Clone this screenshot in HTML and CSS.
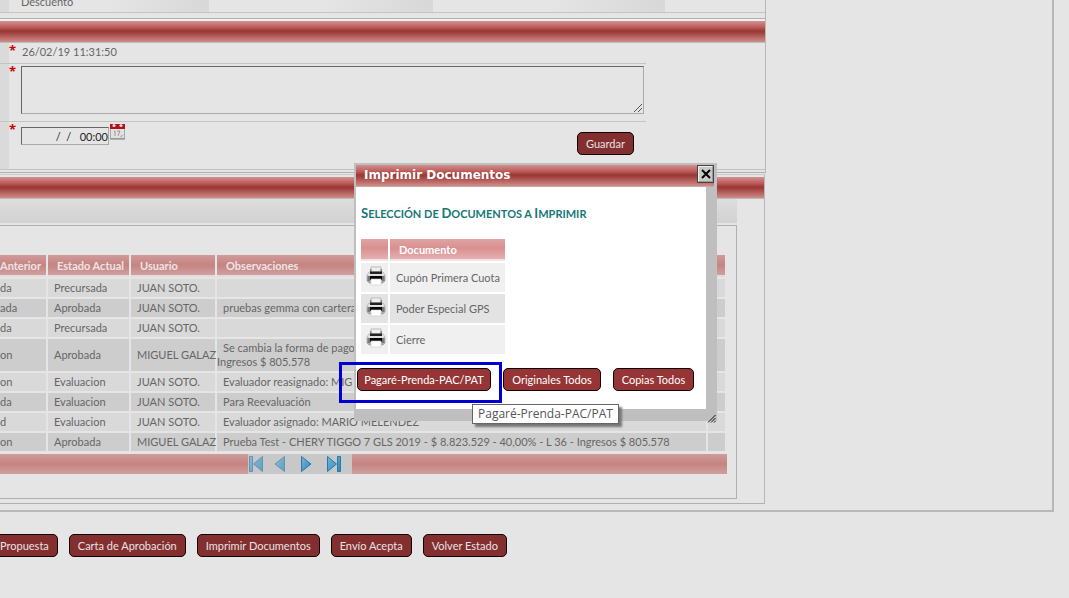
FILE: index.html
```html
<!DOCTYPE html>
<html lang="es">
<head>
<meta charset="utf-8">
<title>Imprimir Documentos</title>
<link rel="stylesheet" href="styles.css">
</head>
<body>
<svg width="0" height="0" class="defs" aria-hidden="true">
  <defs>
    <linearGradient id="metal" x1="0" y1="0" x2="0" y2="1"><stop offset="0" stop-color="#f4f4f4"/><stop offset="1" stop-color="#a4a4a4"/></linearGradient>
    <linearGradient id="blue" x1="0" y1="0" x2="1" y2="1"><stop offset="0" stop-color="#7ab4d6"/><stop offset="1" stop-color="#2787c0"/></linearGradient>
    <symbol id="printer" viewBox="0 0 20 20">
      <path d="M5 1h10v7H5z" fill="#eee" stroke="#bbb"/>
      <path d="M3 6h14l2 3v6l-2 2H3l-2-2V9z" fill="url(#metal)" stroke="#999" stroke-width=".6"/>
      <path d="M4 3h1.500v4H4zM14.500 3H16v4h-1.500z" fill="#888"/>
      <path d="M4 5.500h12v2.500H4z" fill="#222"/>
      <path d="M4 10h12v4H4z" fill="#050505"/>
      <path d="M1.500 10H4v5H1.500zM16 10h2.500v5H16z" fill="#777"/>
      <path d="M5 13h10v6H5z" fill="#fff" stroke="#ccc" stroke-width=".6"/>
    </symbol>
  </defs>
</svg>
<div class="frame">
  <div class="panel top-panel">
    <div class="fields"><span class="label-cell"></span><span class="field-one">Descuento</span><span class="field-two"></span><span class="field-three"></span></div>
  </div>
  <form class="panel form-panel">
    <div class="bar"></div>
    <div class="form-body">
      <div class="form-row date-row"><span class="star">*</span><span>26/02/19 11:31:50</span></div>
      <div class="form-row note-row"><span class="star">*</span><div class="note"><textarea aria-label="Observaciones"></textarea><svg class="grip" width="10" height="10" viewBox="0 0 10 10"><path d="M1 9L9 1M5 9l4-4" stroke="#555"/></svg></div></div>
      <div class="form-row time-row"><span class="star">*</span><input class="time" type="text" aria-label="Fecha y hora" value="/  /   00:00">
        <svg class="calendar" width="15" height="17" viewBox="0 0 15 17"><path d="M.5 5h14v11H.5z" fill="#e2e2e2" stroke="#aaa"/><path d="M0 15h15v1.500H0z" fill="#999"/><path d="M0 1h15v5H0z" fill="#b41118"/><circle cx="4" cy="2.500" r="1.600" fill="#ddd"/><circle cx="11" cy="2.500" r="1.600" fill="#ddd"/><path d="M4 9l1-1v5M7 8h3l-2 5" fill="none" stroke="#888" stroke-width=".8"/><path d="M10 13l4-2-3 4z" fill="#a7bac4"/></svg>
        <button class="btn save" type="button">Guardar</button></div>
    </div>
  </form>
  <section class="panel history">
    <div class="bar"></div>
    <div class="toolbar"></div>
    <div class="box">
      <table class="log">
        <colgroup><col class="c1"><col class="c2"><col class="c3"><col><col class="c5"></colgroup>
        <thead><tr><th class="cut">Anterior</th><th>Estado Actual</th><th>Usuario</th><th>Observaciones</th><th></th></tr></thead>
        <tbody>
          <tr><td class="cut">da</td><td>Precursada</td><td>JUAN SOTO.</td><td></td><td></td></tr>
          <tr><td class="cut">ada</td><td>Aprobada</td><td>JUAN SOTO.</td><td>pruebas gemma con cartera</td><td></td></tr>
          <tr><td class="cut">da</td><td>Precursada</td><td>JUAN SOTO.</td><td></td><td></td></tr>
          <tr><td class="cut">on</td><td>Aprobada</td><td>MIGUEL GALAZ</td><td class="wrapped">Se cambia la forma de pago<br>Ingresos $ 805.578</td><td></td></tr>
          <tr><td class="cut">on</td><td>Evaluacion</td><td>JUAN SOTO.</td><td>Evaluador reasignado: MIG</td><td></td></tr>
          <tr><td class="cut">da</td><td>Evaluacion</td><td>JUAN SOTO.</td><td>Para Reevaluación</td><td></td></tr>
          <tr><td class="cut">d</td><td>Evaluacion</td><td>JUAN SOTO.</td><td>Evaluador asignado: MARIO MELENDEZ</td><td></td></tr>
          <tr><td class="cut">on</td><td>Aprobada</td><td>MIGUEL GALAZ</td><td>Prueba Test - CHERY TIGGO 7 GLS 2019 - $ 8.823.529 - 40,00% - L 36 - Ingresos $ 805.578</td><td></td></tr>
        </tbody>
      </table>
      <div class="pager"><nav class="pages" aria-label="Páginas">
        <button type="button" class="off" aria-label="Primera"><svg width="16" height="18" viewBox="0 0 16 18"><path d="M1.500 1.500h3v15h-3zM14.500 1.500v15L5.500 9z"/></svg></button>
        <button type="button" class="off" aria-label="Anterior"><svg width="16" height="18" viewBox="0 0 16 18"><path d="M10.500 1.500v15L1 9z"/></svg></button>
        <button type="button" aria-label="Siguiente"><svg width="16" height="18" viewBox="0 0 16 18"><path d="M1.500 1.500v15L11 9z"/></svg></button>
        <button type="button" aria-label="Última"><svg width="16" height="18" viewBox="0 0 16 18"><path d="M11.500 1.500h3v15h-3zM1.500 1.500v15l9-7.500z"/></svg></button>
      </nav></div>
    </div>
  </section>
</div>
<div class="actions">
  <button class="btn first" type="button">Propuesta</button>
  <button class="btn" type="button">Carta de Aprobación</button>
  <button class="btn" type="button">Imprimir Documentos</button>
  <button class="btn" type="button">Envío Acepta</button>
  <button class="btn" type="button">Volver Estado</button>
</div>

<div class="modal" role="dialog" aria-labelledby="modal-title">
  <div class="modal-head"><h1 id="modal-title">Imprimir Documentos</h1><button class="close" type="button" aria-label="Cerrar"><svg width="12" height="12" viewBox="0 0 12 12"><path d="M2 2l8 8M10 2l-8 8" stroke="#000" stroke-width="2"/></svg></button></div>
  <div class="modal-body">
    <h2><span>S</span>elección de <span>D</span>ocumentos a <span>I</span>mprimir</h2>
    <table class="docs">
      <thead><tr><th class="icon"></th><th>Documento</th></tr></thead>
      <tbody>
        <tr><td class="icon"><svg width="20" height="20"><use href="#printer"/></svg></td><td>Cupón Primera Cuota</td></tr>
        <tr><td class="icon"><svg width="20" height="20"><use href="#printer"/></svg></td><td>Poder Especial GPS</td></tr>
        <tr><td class="icon"><svg width="20" height="20"><use href="#printer"/></svg></td><td>Cierre</td></tr>
      </tbody>
    </table>
    <div class="modal-actions">
      <button class="btn" type="button">Pagaré-Prenda-PAC/PAT</button>
      <button class="btn" type="button">Originales Todos</button>
      <button class="btn" type="button">Copias Todos</button>
    </div>
  </div>
  <svg class="resize" width="9" height="9" viewBox="0 0 9 9"><path d="M1 8.500L8.500 1M4 8.500L8.500 4M7 8.500L8.500 7" stroke="#111"/></svg>
</div>
<div class="highlight"></div>
<div class="tooltip" role="tooltip">Pagaré-Prenda-PAC/PAT</div>
</body>
</html>
```
FILE: styles.css
```css
* { box-sizing: border-box; }
body { margin: 0; background: #e5e5e5; color: #666; font: 11px/14px Lato, "Open Sans", sans-serif; overflow: hidden; }
.defs { position: absolute; }
button, input, textarea { font: inherit; }
.frame { margin-right: 15px; padding-bottom: 6px; border: 2px solid #b8b8b8; border-width: 0 2px 2px 0; }
.panel { margin-right: 286px; border-right: 1px solid #b8b8b8; }
.top-panel { height: 18px; }
.fields { display: grid; grid-template-columns: 9px 200px 224px 232px; height: 13px; border-bottom: 1px solid #c4c4c4; align-items: end; }
.fields span { height: 12px; }
.label-cell { background: #dadada; }
.fields .field-one { padding-left: 12px; line-height: 4px; }
.field-one, .field-two, .field-three { background: linear-gradient(to right, #e5e5e5 50%, #d8d8d8); }
.bar { height: 22px; border-bottom: 1px solid #bbb; background: linear-gradient(#cf9292, #bd5b59 30%, #993735 48%, #a54845 60%, #d18c89); }
.form-panel { height: 155px; border-top: 1px solid #b0b0b0; border-bottom: 1px solid #b0b0b0; padding-top: 2px; box-shadow: inset 0 2px #f0f0f0; }
.form-body { height: 127px; border-bottom: 1px solid #c2c2c2; background: linear-gradient(#dadada, #dadada) no-repeat left / 9px 100%; }
.form-row { display: flex; margin-right: 119px; border-bottom: 1px solid #c4c4c4; padding-left: 9px; }
.star { flex: none; width: 12px; color: #d30000; font: bold 13px/14px "Open Sans", sans-serif; }
.date-row { height: 21px; line-height: 18px; }
.date-row span + span { padding-left: 1px; }
.note-row { height: 58px; }
.note { position: relative; flex: 1; margin-right: 2px; padding-top: 2px; }
textarea { display: block; width: 100%; height: 48px; resize: none; background: transparent; border: 1px solid #aaa; border-top-color: #666; border-left-color: #666; }
.grip { position: absolute; right: 1px; bottom: 8px; }
.time-row { border: 0; height: 46px; }
.time { width: 88px; height: 18px; margin-top: 5px; padding: 0; text-align: right; color: #222; background: transparent; border: 1px solid #aaa; border-top-color: #666; border-left-color: #666; white-space: pre; }
.calendar { margin: 1px; }
.btn { height: 23px; padding: 0 8px; color: #fff; background: #953535; border: 1px solid #100000; border-radius: 5px; white-space: nowrap; }
.save { margin: 10px 12px 0 auto; }
.save, .actions .btn { background: #832f2f; color: #e8e2e2; }
.history { margin-top: 1px; margin-right: 287px; padding: 2px 0 4px; border-top: 1px solid #ccc; border-bottom: 1px solid #b0b0b0; }
.toolbar { height: 24px; margin: 0 27px 2px 0; background: linear-gradient(#ddd, #d2d2d2); }
.box { margin-right: 27px; padding: 27px 9px 24px 0; border: 1px solid #b0b0b0; border-left: 0; }
.log { width: calc(100% + 2px); table-layout: fixed; border-collapse: separate; border-spacing: 2px; margin-left: -2px; }
.c1 { width: 46px; } .c2 { width: 81px; } .c3 { width: 84px; } .c5 { width: 17px; }
th { height: 22px; padding: 1px 9px 0; text-align: left; color: #fff; border-bottom: 2px solid #efe4e4; background: linear-gradient(#dfa4a4, #d98f8f 45%, #e6b0b0); white-space: nowrap; }
td { padding: 2px 6px; white-space: nowrap; }
.log th { color: #ece4e4; border-color: #e2dddd; background: linear-gradient(#cf9b9b, #c58481 50%, #cfa0a0); }
.log td { height: 18px; padding-right: 0; background: #d9d9d9; }
.log tr:nth-child(even) td { background: #cdcdcd; }
.log .cut { padding-left: 0; padding-right: 0; }
.log .wrapped { padding-left: 0; text-indent: 6px; }
.pager { height: 20px; margin-top: 1px; margin-right: -9px; padding-left: 248px; background: linear-gradient(#cf9b9b, #c58481 50%, #cfa0a0); }
.box .pager { margin-right: 0; }
.pages { display: flex; gap: 10px; width: 104px; height: 20px; background: #c8c8c8; }
.pages button { padding: 1px 0; border: 0; background: none; line-height: 0; }
.pages path { fill: url(#blue); stroke: #297aaa; }
.off { opacity: .65; }
.actions { display: flex; gap: 11px; padding-top: 22px; }
.first { margin-left: -9px; }
.modal { position: absolute; left: 354px; top: 163px; width: 363px; padding: 2px 3px 12px 2px; background: #bfbfbf; }
.modal-head { display: flex; height: 22px; border-bottom: 1px solid #c8a9a9; background: linear-gradient(#cf9292, #bd5b59 30%, #993735 48%, #a54845 60%, #d18c89); }
h1 { flex: 1; margin: 0; padding-left: 8px; color: #fff; font: bold 12px/20px Verdana, "DejaVu Sans", sans-serif; }
.close { width: 17px; height: 18px; padding: 0; border: 2px outset #eee; outline: 1px solid #444; outline-offset: -1px; background: #c9c9c9; line-height: 0; }
.modal-body { margin-right: 8px; height: 222px; padding-top: 18px; background: #fff; }
h2 { margin: 0 5px 15px; color: #167777; font: bold 11px/17px Lato, sans-serif; text-transform: uppercase; }
h2 span { font-size: 13px; }
.docs { width: 148px; margin-left: 3px; border-spacing: 2px; }
.docs td { height: 29px; padding-right: 4px; background: #f0f0f0; }
.docs tr:nth-child(even) td { background: #e3e3e3; }
.docs .icon { width: 27px; padding: 0 2px 3px 5px; line-height: 0; }
.modal-actions { display: grid; grid-template-columns: 134px 98px 81px; gap: 12px; margin: 12px 0 0 1px; }
.modal-actions .btn { padding: 0; }
.resize { position: absolute; right: 1px; bottom: -2px; }
.highlight { position: absolute; left: 339px; top: 362px; width: 163px; height: 41px; border: 3px solid #0000d2; pointer-events: none; }
.tooltip { position: absolute; left: 472px; top: 404px; padding: 1px 5px; color: #555; background: #fff; border: 1px solid #666; box-shadow: 3px 3px 2px #777; font: 12px/16px "Open Sans", sans-serif; white-space: nowrap; }
```
